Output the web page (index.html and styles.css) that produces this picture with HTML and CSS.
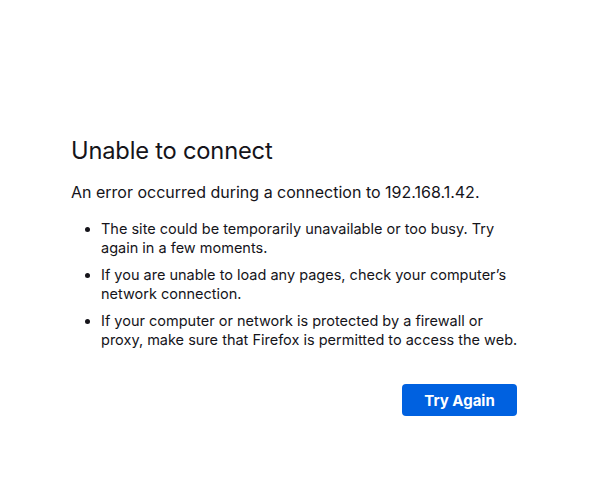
FILE: index.html
```html
<!DOCTYPE html>
<html lang="en">
<head>
<meta charset="utf-8">
<title>Problem loading page</title>
<link rel="stylesheet" href="styles.css">
</head>
<body>
<main class="container">
  <h1 class="title">Unable to connect</h1>
  <p class="desc">An error occurred during a connection to 192.168.1.42.</p>
  <ul class="reasons">
    <li>The site could be temporarily unavailable or too busy. Try again in a few moments.</li>
    <li>If you are unable to load any pages, check your computer’s network connection.</li>
    <li>If your computer or network is protected by a firewall or proxy, make sure that Firefox is permitted to access the web.</li>
  </ul>
  <div class="actions">
    <button class="btn-primary">Try Again</button>
  </div>
</main>
</body>
</html>
```
FILE: styles.css
```css
html, body {
  margin: 0;
  padding: 0;
  background: #ffffff;
}
body {
  font-family: "Inter", "Noto Sans", sans-serif;
  color: #15141a;
}
.container {
  width: 455px;
  margin-left: 71px;
  padding-top: 133px;
}
.title {
  font-size: 23.7px;
  font-weight: 400;
  line-height: 36px;
  margin: 0 0 12px;
  letter-spacing: -0.2px;
}
.desc {
  font-size: 16px;
  line-height: 22px;
  margin: 0 0 16px;
}
.reasons {
  margin: 0;
  padding-left: 30px;
  font-size: 14.5px;
  line-height: 19px;
}
.reasons li {
  margin-bottom: 8px;
}
.actions {
  display: flex;
  justify-content: flex-end;
  margin-top: 35px;
  padding-right: 9px;
}
.btn-primary {
  background: #0061e0;
  color: #ffffff;
  border: none;
  border-radius: 4px;
  width: 115px;
  height: 32px;
  font-family: inherit;
  font-size: 15px;
  font-weight: 700;
  padding: 0;
}
```
